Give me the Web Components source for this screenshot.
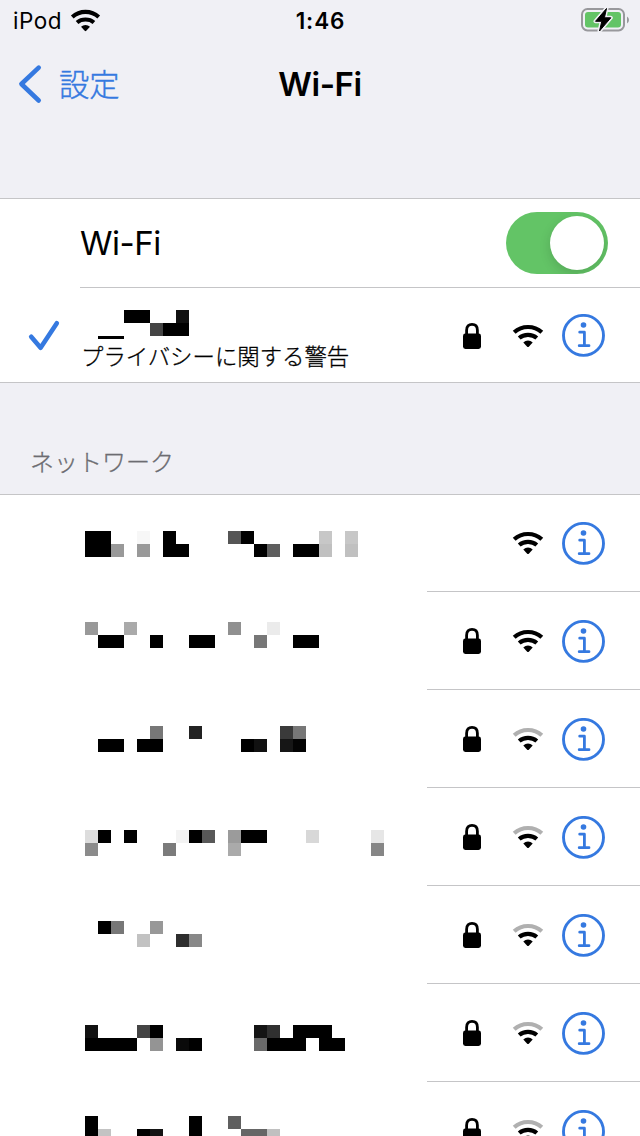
<!DOCTYPE html>
<html lang="ja">
<head>
<meta charset="utf-8">
<title>Wi-Fi</title>
<style>
    body {
        margin: 0;
        background-color: #f0f0f5;
        color: #000;
        font-family: Inter, "Liberation Sans", "Noto Sans CJK JP", sans-serif;
        --blue: #3579e0;
        --line: #c5c5c7;
    }
</style>
</head>
<body>
<wifi-settings></wifi-settings>
<script>
// 信号の強さに合わせて外側の弧の色を変える
class WifiSignal extends HTMLElement {
    constructor() {
        super()
        this.attachShadow({ mode: 'open' })
        const outer = this.getAttribute('level') === '2' ? '#b0b0b0' : '#000'
        this.shadowRoot.innerHTML = `
            <style>
                :host {
                    display: block;
                    width: 32px;
                    height: 24px;
                }
                svg {
                    display: block;
                    width: 100%;
                    height: 100%;
                }
            </style>
            <svg viewBox="0 0 32 24" fill="none" stroke-width="4.2">
                <path d="M2.2 8.3Q8 3 16 3T29.8 8.3" stroke="${outer}"/>
                <path d="M7.2 14Q10.8 10.9 16 10.9T24.8 14" stroke="#000"/>
                <path d="M11.3 18.4Q13.3 16.6 16 16.6T20.7 18.4L16.8 22.7Q16 23.5 15.2 22.7Z" fill="#000"/>
            </svg>
        `
    }
}
// 鍵のアイコン
class LockIcon extends HTMLElement {
    constructor() {
        super()
        this.attachShadow({ mode: 'open' })
        this.shadowRoot.innerHTML = `
            <style>
                :host {
                    display: block;
                    width: 18px;
                    height: 26px;
                }
                svg {
                    display: block;
                }
            </style>
            <svg width="18" height="26" viewBox="0 0 18 26">
                <path d="M3.6 12.5V7.2C3.6 3.3 5.8 1.4 9 1.4S14.4 3.3 14.4 7.2V12.5" fill="none" stroke="#000" stroke-width="2.8"/>
                <rect y="10.6" width="18" height="15.4" rx="2.4"/>
            </svg>
        `
    }
}
// 詳細ボタン
class InfoButton extends HTMLElement {
    constructor() {
        super()
        this.attachShadow({ mode: 'open' })
        this.shadowRoot.innerHTML = `
            <style>
                :host {
                    display: block;
                    width: 43px;
                    height: 43px;
                }
                svg {
                    display: block;
                }
            </style>
            <svg width="43" height="43" viewBox="0 0 43 43" fill="none" stroke="var(--blue)">
                <circle cx="21.5" cy="21.4" r="20" stroke-width="2.9"/>
                <circle cx="21.5" cy="11" r="2.8" fill="var(--blue)" stroke="none"/>
                <path d="M17.7 18.2H22.4V31.7M17.2 31.7H27" stroke-width="2.8" stroke-linecap="round" stroke-linejoin="round"/>
            </svg>
        `
    }
}
// モザイクの名前。一マスを二桁の濃さで表し、".." は空白
class MosaicName extends HTMLElement {
    constructor() {
        super()
        this.attachShadow({ mode: 'open' })
        const size = 13
        let rects = ''
        this.getAttribute('rows').split('/').forEach((row, y) => {
            row.trim().match(/../g).forEach((gray, x) => {
                if (gray === '..') return
                rects += `<rect x="${x * size}" y="${y * size}" width="${size}" height="${size}" fill="#${gray.repeat(3)}"/>`
            })
        })
        this.shadowRoot.innerHTML = `
            <style>
                :host {
                    display: block;
                    width: 312px;
                    height: 26px;
                }
                svg {
                    display: block;
                    width: 100%;
                    height: 100%;
                }
            </style>
            <svg shape-rendering="crispEdges">${rects}</svg>
        `
    }
}
class StatusBar extends HTMLElement {
    constructor() {
        super()
        this.attachShadow({ mode: 'open' })
        this.shadowRoot.innerHTML = `
            <style>
                :host {
                    display: grid;
                    grid-template-columns: 1fr auto 1fr;
                    align-items: center;
                    box-sizing: border-box;
                    height: 41px;
                    padding: 0 11px 0 13px;
                    font-size: 22.5px;
                }
                .device {
                    display: flex;
                    align-items: center;
                    gap: 9px;
                    letter-spacing: 0.5px;
                }
                wifi-signal {
                    width: 31px;
                    height: 23px;
                    margin: 0 0 1px -1px;
                }
                .time {
                    margin-right: 1px;
                    font-weight: 600;
                    letter-spacing: 0.9px;
                }
                .battery {
                    justify-self: end;
                    margin-bottom: 1px;
                }
            </style>
            <div class="device"><span>iPod</span><wifi-signal></wifi-signal></div>
            <div class="time">1:46</div>
            <svg class="battery" width="48" height="26" viewBox="0 0 48 26">
                <rect x="1" y="2" width="42" height="21.4" rx="5.5" fill="none" stroke="#98989c" stroke-width="2"/>
                <path d="M46 9.5Q48 10.5 48 13T46 16.5Z" fill="#98989c"/>
                <rect x="4" y="5" width="36" height="15.4" rx="3" fill="#63c466"/>
                <path d="M25.5 1.5L14.5 14.3H20.8L18.5 24L29.8 10.8H23.4Z" stroke="#f0f0f5" stroke-width="4" stroke-linejoin="round"/>
                <path d="M25.5 1.5L14.5 14.3H20.8L18.5 24L29.8 10.8H23.4Z" stroke="#000" stroke-width="1" stroke-linejoin="round"/>
            </svg>
        `
    }
}
class NavBar extends HTMLElement {
    constructor() {
        super()
        this.attachShadow({ mode: 'open' })
        this.shadowRoot.innerHTML = `
            <style>
                :host {
                    display: grid;
                    grid-template-columns: 1fr auto 1fr;
                    align-items: center;
                    height: 85px;
                    padding: 0 18px;
                }
                .back {
                    display: flex;
                    align-items: center;
                    gap: 17px;
                    color: var(--blue);
                    font-size: 30.3px;
                    font-weight: 300;
                    font-family: "Noto Sans CJK JP", sans-serif;
                    line-height: 40px;
                    -webkit-text-stroke: 0.4px;
                }
                .label {
                    padding-bottom: 2px;
                }
                .title {
                    font-size: 33px;
                    font-weight: 600;
                    line-height: 40px;
                    letter-spacing: -0.4px;
                }
            </style>
            <div class="back">
                <svg width="24" height="40" viewBox="0 0 24 40" fill="none" stroke="var(--blue)" stroke-width="4.6" stroke-linecap="round" stroke-linejoin="round">
                    <path d="M20.7 3.6L3.4 20L20.7 36.5"/>
                </svg>
                <div class="label"><slot name="back"></slot></div>
            </div>
            <div class="title"><slot></slot></div>
        `
    }
}
class ToggleSwitch extends HTMLElement {
    constructor() {
        super()
        this.attachShadow({ mode: 'open' })
        this.shadowRoot.innerHTML = `
            <style>
                :host {
                    display: flex;
                    justify-content: flex-end;
                    box-sizing: border-box;
                    width: 102px;
                    height: 62px;
                    padding: 4px;
                    border-radius: 31px;
                    background-color: #63c466;
                    overflow: hidden;
                }
                .knob {
                    width: 54px;
                    height: 54px;
                    border-radius: 50%;
                    background-color: #fff;
                    box-shadow: 0 4px 12px rgba(0, 0, 0, 0.14);
                }
            </style>
            <div class="knob"></div>
        `
    }
}
// ネットワーク一行分
class NetworkRow extends HTMLElement {
    constructor() {
        super()
        this.attachShadow({ mode: 'open' })
        const lock = this.hasAttribute('open') ? '' : '<lock-icon></lock-icon>'
        const level = this.getAttribute('level') || '3'
        this.shadowRoot.innerHTML = `
            <style>
                :host {
                    display: grid;
                    grid-template-columns: 427px 1fr;
                    height: 98px;
                }
                .name {
                    padding-left: 85px;
                }
                .actions {
                    display: grid;
                    grid-template-columns: 18px 32px 43px;
                    column-gap: 31px;
                    align-content: end;
                    align-items: center;
                    box-sizing: border-box;
                    padding: 0 0 26px 36px;
                    border-bottom: 1px solid var(--line);
                }
                lock-icon {
                    margin-bottom: 1px;
                }
                wifi-signal {
                    grid-column: 2;
                    margin-bottom: 1px;
                }
                info-button {
                    grid-column: 3;
                    margin-left: -13px;
                }
            </style>
            <div class="name"><slot></slot></div>
            <div class="actions">${lock}<wifi-signal level="${level}"></wifi-signal><info-button></info-button></div>
        `
    }
}
class WifiSettings extends HTMLElement {
    constructor() {
        super()
        this.attachShadow({ mode: 'open' })
        this.shadowRoot.innerHTML = `
            <style>
                :host {
                    display: block;
                    width: 640px;
                    height: 1136px;
                    overflow: hidden;
                }
                .group {
                    border-top: 1px solid var(--line);
                    background-color: #fff;
                }
                .current {
                    margin-top: 72px;
                    border-bottom: 1px solid var(--line);
                }
                .switch-row {
                    display: flex;
                    align-items: center;
                    justify-content: space-between;
                    height: 88px;
                    margin-left: 80px;
                    padding-right: 32px;
                    border-bottom: 1px solid var(--line);
                    font-size: 33px;
                    letter-spacing: -0.5px;
                }
                .connected {
                    display: grid;
                    grid-template-columns: 81px 382px 18px 32px 43px;
                    align-items: center;
                    height: 94px;
                }
                .check {
                    margin-left: 27px;
                }
                .ssid {
                    padding-top: 10px;
                }
                .ssid mosaic-name {
                    height: 29px;
                    margin-left: 4px;
                }
                .warning {
                    font-family: "Noto Sans CJK JP", sans-serif;
                    font-size: 22.4px;
                    font-weight: 300;
                    line-height: 32px;
                    white-space: nowrap;
                    -webkit-text-stroke: 0.3px;
                }
                .connected lock-icon {
                    margin-top: 1px;
                }
                .connected wifi-signal {
                    margin-top: 1px;
                    margin-left: 31px;
                }
                .connected info-button {
                    margin-left: 49px;
                }
                .heading {
                    box-sizing: border-box;
                    height: 111px;
                    padding: 60px 0 0 30px;
                    color: #6c6c71;
                    font-family: "Noto Sans CJK JP", sans-serif;
                    font-size: 24px;
                    font-weight: 300;
                    line-height: 36px;
                    -webkit-text-stroke: 0.3px;
                }
                network-row:first-child {
                    height: 97px;
                }
            </style>
            <status-bar></status-bar>
            <nav-bar><span slot="back">設定</span>Wi-Fi</nav-bar>
            <div class="group current">
                <div class="switch-row"><span>Wi-Fi</span><toggle-switch></toggle-switch></div>
                <div class="connected">
                    <svg class="check" width="34" height="34" viewBox="0 0 34 34" fill="none" stroke="var(--blue)" stroke-width="4.6" stroke-linecap="round" stroke-linejoin="round">
                        <path d="M4.2 18.7L13.6 29.8L29.8 5.2"/>
                    </svg>
                    <div class="ssid">
                        <mosaic-name rows="......0000....11/..........440000/..0000"></mosaic-name>
                        <div class="warning">プライバシーに関する警告</div>
                    </div>
                    <lock-icon></lock-icon>
                    <wifi-signal></wifi-signal>
                    <info-button></info-button>
                </div>
            </div>
            <div class="heading">ネットワーク</div>
            <div class="group">
                <network-row open><mosaic-name style="margin-top: 36px" rows="0000....f7..00........5500..........c7..c7/000099..99..0000..........005e..0000c0..c0"></mosaic-name></network-row>
                <network-row><mosaic-name style="margin-top: 30px" rows="99....aa..............90....eb/..0000....00....0000......77....0000"></mosaic-name></network-row>
                <network-row level="2"><mosaic-name style="margin-top: 36px" rows="..........77....22............3a77/..0000..0000............0011..1604"></mosaic-name></network-row>
                <network-row level="2"><mosaic-name style="margin-top: 42px" rows="dd00..00......f30058..9b0000......d8........e6/8b..........7b........aa....................86"></mosaic-name></network-row>
                <network-row level="2"><mosaic-name style="margin-top: 35px" rows="..0077....98/........c2....2e88"></mosaic-name></network-row>
                <network-row level="2"><mosaic-name style="margin-top: 41px" rows="11......4400..............1430..000000/00000000..94..0a00........69000000..0000"></mosaic-name></network-row>
                <network-row level="2"><mosaic-name style="margin-top: 34px" rows="00..............00....5f/00c3....0014....00......6666c0"></mosaic-name></network-row>
            </div>
        `
    }
}
customElements.define('wifi-signal', WifiSignal)
customElements.define('lock-icon', LockIcon)
customElements.define('info-button', InfoButton)
customElements.define('mosaic-name', MosaicName)
customElements.define('status-bar', StatusBar)
customElements.define('nav-bar', NavBar)
customElements.define('toggle-switch', ToggleSwitch)
customElements.define('network-row', NetworkRow)
customElements.define('wifi-settings', WifiSettings)
</script>
</body>
</html>
